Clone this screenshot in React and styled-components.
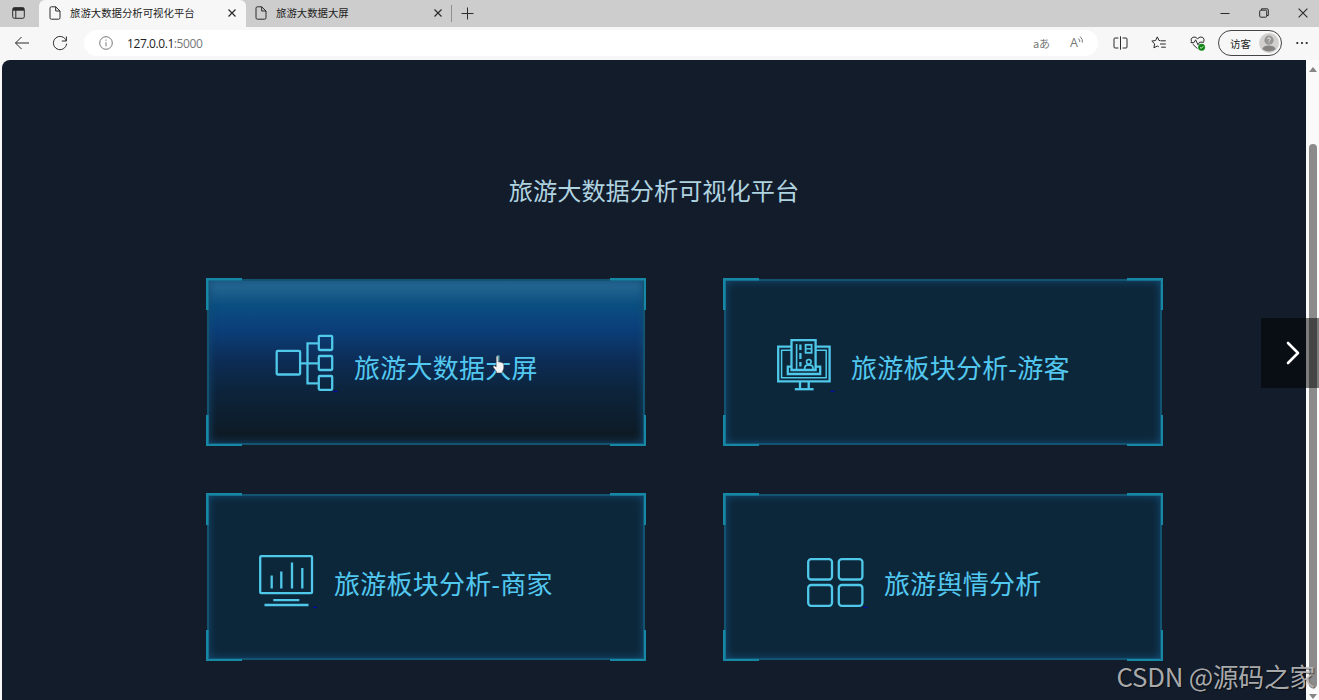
import React from 'react'
import styled, { createGlobalStyle, css } from 'styled-components'

const TreeIcon = () => (
	<LineIcon viewBox='0 0 80 60'>
		<rect x='2.7' y='18.9' width='23.4' height='23.6' rx='1' />
		<rect x='44.8' y='3.8' width='13.4' height='14.2' rx='1' />
		<rect x='44.8' y='24' width='13.4' height='14' rx='1' />
		<rect x='44.8' y='44' width='13.4' height='13.8' rx='1' />
		<path d='M26 31.4H44.8M44.8 11.3H33.5V51.3H44.8' />
		<path className='dash' d='M59.5 59.4H63.5' />
	</LineIcon>
)

const TicketIcon = () => (
	<LineIcon viewBox='0 0 80 60'>
		<path d='M20.5 14.7H7.2V49.4H58.6V14.7H44.6' />
		<path d='M20.5 18.3H10.6V45.8H55.2V18.3H44.6' strokeWidth='1.5' />
		<path d='M20.5 34.7H16.8V42H49.2V34.7H44.6' />
		<path d='M20.5 38V8.2H44.6V38Z' />
		<path d='M25.6 12V38' strokeWidth='1.6' />
		<path d='M29.4 12.5V18M29.4 21V27M29.4 30V34.5' />
		<rect x='34.6' y='12.8' width='6' height='8' strokeWidth='1.8' />
		<path d='M34.6 16.8H40.6' strokeWidth='1.5' />
		<circle cx='37.8' cy='29.8' r='2.3' strokeWidth='1.6' />
		<path d='M33.7 38V36Q34 33.4 36.3 33.2H39.3Q41.7 33.4 42 36V38' strokeWidth='1.7' />
		<path d='M29 50V56.7M37.7 50V56.7' />
		<path d='M23.8 57.2H42.6' />
		<path className='dash' d='M59.5 59.4H63.5' />
	</LineIcon>
)

const ChartIcon = () => (
	<LineIcon viewBox='0 0 80 60'>
		<rect x='6.2' y='8.2' width='51.8' height='37' rx='1' />
		<path d='M17.7 27.5V40.5M27.3 23.5V40.5M38 14.5V40.5M48.3 20V40.5' />
		<path d='M19.3 52.2H45.3M10.5 57H54.5' />
		<path className='dash' d='M59 59.4H63' />
	</LineIcon>
)

const BlocksIcon = () => (
	<LineIcon viewBox='0 0 80 60'>
		<rect x='4.2' y='11.1' width='23.8' height='20.4' rx='3' />
		<rect x='34.8' y='11.1' width='23.6' height='20.4' rx='3' />
		<rect x='4.2' y='37' width='23.8' height='20.8' rx='3' />
		<rect x='34.8' y='37' width='23.6' height='20.8' rx='3' />
		<path className='dash' d='M59.5 59.4H63.5' />
	</LineIcon>
)

const PageIcon = () => (
	<BarIcon width='12' height='14' viewBox='0 0 12 14'>
		<path d='M1 2.2Q1 .8 2.4.8H6.7L11 5V11.8Q11 13.2 9.6 13.2H2.4Q1 13.2 1 11.8ZM6.7.8V5H11' />
	</BarIcon>
)

const CrossIcon = ({ size = 8, stroke = 1.2 }) => (
	<BarIcon width={size} height={size} viewBox='0 0 8 8' strokeWidth={stroke}>
		<path d='M.5.5L7.5 7.5M7.5.5L.5 7.5' />
	</BarIcon>
)

const cards = [
	{ label: '旅游大数据大屏', icon: TreeIcon, indent: 68, active: true },
	{ label: '旅游板块分析-游客', icon: TicketIcon, indent: 48 },
	{ label: '旅游板块分析-商家', icon: ChartIcon, indent: 48, drop: 2 },
	{ label: '旅游舆情分析', icon: BlocksIcon, indent: 81, drop: 2 },
]

const App = () => {
	return (
		<Browser>
			<GlobalStyle />
			<TabBar>
				<TabMenu>
					<BarIcon width='13' height='12' viewBox='0 0 13 12'>
						<rect x='.7' y='.7' width='11.6' height='10.6' rx='1.6' />
						<path d='M1 2.2H12' strokeWidth='3' />
						<path d='M3.8 3V11' />
					</BarIcon>
				</TabMenu>
				<Tab $active $width={207}>
					<PageIcon />
					<TabTitle>旅游大数据分析可视化平台</TabTitle>
					<CrossIcon />
				</Tab>
				<Tab $width={205}>
					<PageIcon />
					<TabTitle>旅游大数据大屏</TabTitle>
					<CrossIcon />
				</Tab>
				<TabDivider />
				<BarIcon width='13' height='13' viewBox='0 0 13 13'>
					<path d='M6.5.5V12.5M.5 6.5H12.5' />
				</BarIcon>
				<WindowButtons>
					<BarIcon width='10' height='10' viewBox='0 0 10 10'>
						<path d='M.5 5.5H9.5' />
					</BarIcon>
					<BarIcon width='10' height='10' viewBox='0 0 10 10'>
						<rect x='.7' y='2.2' width='7' height='7' rx='1' />
						<path d='M2.5 2V.8H8Q9.3.8 9.3 2V7.5H8' />
					</BarIcon>
					<CrossIcon size={10} stroke={0.9} />
				</WindowButtons>
			</TabBar>

			<Toolbar>
				<BarIcon width='16' height='14' viewBox='0 0 16 14'>
					<path d='M15 7H1.5M7.5 1L1.5 7L7.5 13' />
				</BarIcon>
				<BarIcon width='16' height='16' viewBox='0 0 16 16'>
					<path d='M14.3 6A6.6 6.6 0 1 0 14.6 8.6M14.4 1.5V6H9.8' />
				</BarIcon>
				<AddressBar>
					<BarIcon $muted width='14' height='14' viewBox='0 0 14 14' strokeWidth='1'>
						<circle cx='7' cy='7' r='6.3' />
						<path d='M7 6.2V10.3M7 3.6V4.8' />
					</BarIcon>
					<Url>127.0.0.1<span>:5000</span></Url>
					<Translate>aあ</Translate>
					<ReadAloud>
						A
						<BarIcon $muted width='6' height='8' viewBox='0 0 6 8' strokeWidth='1'>
							<path d='M.5 2.5Q2 4 1.8 6M2.2.6Q5 3.2 4.4 6.6' />
						</BarIcon>
					</ReadAloud>
				</AddressBar>
				<Tools>
					<BarIcon width='15' height='14' viewBox='0 0 15 14'>
						<path d='M5.4 2H2Q1 2 1 3V11Q1 12 2 12H5.4M9.6 2H13Q14 2 14 3V11Q14 12 13 12H9.6M7.5.3V13.7' />
					</BarIcon>
					<BarIcon width='16' height='14' viewBox='0 0 16 14'>
						<path d='M9.2 4.5H8L6.3.9L4.6 4.5L.8 5.1L3.6 7.8L2.9 11.8L6.3 10L7.8 10.8M9.5 4.8H14.8M9 8H14.8M10.2 11.2H14.8' />
					</BarIcon>
					<BarIcon width='17' height='15' viewBox='0 0 17 15'>
						<path d='M1.4 5.7Q.4 2.8 2.5 1.4Q5.2 0 7.6 2.7Q10 0 12.8 1.4Q14.8 3 13.8 5.7M2.6 8L7.5 12.7M.6 6.6H4L5.6 3.8L8 8.8L9.6 6.2H14' />
						<circle cx='11.6' cy='11.3' r='3.2' fill='#128417' stroke='#128417' strokeWidth='.6' />
						<path d='M10.1 11.4L11.2 12.4L13.2 10.3' stroke='#fff' strokeWidth='.9' />
					</BarIcon>
				</Tools>
				<Profile>
					访客
					<svg width='20' height='20' viewBox='0 0 20 20'>
						<circle cx='10' cy='10' r='10' fill='#d2d0ce' />
						<circle cx='10' cy='7.2' r='4.6' fill='#979593' />
						<path d='M3.4 16.2Q4 12.6 10 12.6Q16 12.6 16.6 16.2Q10 20.8 3.4 16.2Z' fill='#858381' />
						<path d='M8.6 6.1Q8.8 4.8 10 4.8Q11.5 5 11.3 6.3Q10.9 7.2 10 7.8V8.5M10 9.6V10.3' fill='none' stroke='#eee' />
					</svg>
				</Profile>
				<BarIcon width='12' height='4' viewBox='0 0 12 4' strokeWidth='0'>
					<g fill='#222'>
						<circle cx='1.3' cy='2' r='1.1' />
						<circle cx='6' cy='2' r='1.1' />
						<circle cx='10.7' cy='2' r='1.1' />
					</g>
				</BarIcon>
			</Toolbar>

			<Content>
				<Page>
					<Title>旅游大数据分析可视化平台</Title>
					<CardGrid>
						{
							cards.map(({ label, icon: Icon, indent, drop, active }) => (
								<Card key={label} $indent={indent} $drop={drop} $active={active}>
									<Icon />
									<CardLabel>{label}</CardLabel>
								</Card>
							))
						}
					</CardGrid>
				</Page>
				<Scrollbar>
					<Arrow $up />
					<Thumb />
					<Arrow />
				</Scrollbar>
			</Content>

			<Pointer width='14' height='20' viewBox='0 0 14 20'>
				<path d='M4.2 10.5V2Q4.2.8 5.2.8Q6.2.8 6.2 2V7Q7.2 6.2 8 7.3Q9.2 6.6 9.9 7.9Q11.6 7.6 11.8 9.2V13Q11.6 15 10.5 16.2V18H4.4V16.6L1.2 12.2Q.6 10.8 2 10.6Q3.2 10.7 4.2 12Z' fill='#f4f4f4' stroke='#333' strokeWidth='.5' />
			</Pointer>
			<NextButton>
				<svg width='14' height='24' viewBox='0 0 14 24'>
					<path d='M2 2L12 12L2 22' fill='none' stroke='#fff' strokeWidth='2.6' strokeLinecap='round' strokeLinejoin='round' />
				</svg>
			</NextButton>
			<Watermark>CSDN @源码之家</Watermark>
		</Browser>
	)
}

const GlobalStyle = createGlobalStyle`
	* {
		box-sizing: border-box;
	}

	body {
		margin: 0;
		overflow: hidden;
		font-family: "Noto Sans CJK SC", "Noto Sans", sans-serif;
	}
`

const Browser = styled.div`
	position: relative;
	display: flex;
	flex-direction: column;
	height: 700px;
	overflow: hidden;
	background-color: #f7f7f7;
`

const BarIcon = styled.svg`
	flex: none;
	fill: none;
	stroke: ${({ $muted }) => $muted ? '#777' : '#2b2b2b'};
	stroke-linejoin: round;
`

const LineIcon = styled.svg`
	flex: none;
	width: 80px;
	height: 60px;
	fill: none;
	stroke: #4fc8ea;
	stroke-width: 2.3;

	.dash {
		stroke: #0808a8;
		stroke-width: 1.2;
	}
`

const TabBar = styled.div`
	display: flex;
	align-items: center;
	height: 27px;
	padding-bottom: 1px;
	background-color: #cdcdcd;
`

const TabMenu = styled.div`
	display: flex;
	justify-content: center;
	width: 39px;
	padding-right: 2px;
`

const Tab = styled.div`
	display: flex;
	align-items: center;
	width: ${({ $width }) => $width}px;
	height: 27px;
	margin-bottom: -1px;
	padding: 0 ${({ $active }) => $active ? 10 : 9}px 2px ${({ $active }) => $active ? 10 : 9}px;
	border-radius: 6px 6px 0 0;
	background-color: ${({ $active }) => $active ? '#f7f7f7' : 'transparent'};
`

const TabTitle = styled.span`
	flex: 1;
	margin-left: 9px;
	font-size: 10.4px;
	line-height: 16px;
	color: #1c1c1c;
	white-space: nowrap;
`

const TabDivider = styled.div`
	width: 1px;
	height: 17px;
	margin-right: 9px;
	background-color: #8f8f8f;
`

const WindowButtons = styled.div`
	display: flex;
	align-items: center;
	gap: 29px;
	margin-left: auto;
	padding-right: 11px;
`

const Toolbar = styled.div`
	display: flex;
	align-items: center;
	height: 33px;
	padding: 0 11px 1px 14px;
	background-color: #f7f7f7;

	> svg + svg {
		margin-left: 22px;
	}
`

const AddressBar = styled.div`
	display: flex;
	align-items: center;
	width: 1014px;
	height: 26px;
	margin-left: 16px;
	padding: 0 14px 0 15px;
	border-radius: 13px;
	background-color: #fff;
`

const Url = styled.span`
	flex: 1;
	margin-left: 14px;
	font-family: "Open Sans", "Noto Sans", sans-serif;
	font-size: 12px;
	letter-spacing: -0.42px;
	color: #222;

	span {
		color: #777;
	}
`

const Translate = styled.span`
	margin-right: 20px;
	font-size: 11px;
	line-height: 16px;
	color: #777;
`

const ReadAloud = styled.span`
	display: flex;
	align-items: center;
	font-family: "Open Sans", sans-serif;
	font-size: 12.5px;
	line-height: 16px;
	color: #777;

	svg {
		margin-bottom: 6px;
	}
`

const Tools = styled.div`
	display: flex;
	align-items: center;
	gap: 23px;
	margin-left: 15px;
`

const Profile = styled.div`
	display: flex;
	align-items: center;
	justify-content: space-between;
	width: 64px;
	height: 26px;
	margin: 0 auto 0 11px;
	padding: 0 2px 0 11px;
	border: 1px solid #444;
	border-radius: 13px;
	font-size: 10.5px;
	color: #1c1c1c;
`

const Content = styled.div`
	display: flex;
	flex: 1;
	padding-left: 2px;
`

const Page = styled.main`
	width: 1304px;
	height: 640px;
	border-top-left-radius: 8px;
	background-color: #131c2a;
`

const Title = styled.h1`
	margin: 112px 0 0;
	font-size: 24.2px;
	font-weight: 400;
	line-height: 36px;
	text-align: center;
	color: #b0d3e0;
`

const CardGrid = styled.div`
	display: grid;
	grid-template-columns: 440px 440px;
	grid-auto-rows: 168px;
	gap: 47px 77px;
	margin: 70px 0 0 204px;
`

const mark = 'linear-gradient(#1688a6, #1688a6)'

const Card = styled.a`
	position: relative;
	display: flex;
	align-items: center;
	padding-top: ${({ $drop = 0 }) => $drop}px;
	padding-left: ${({ $indent }) => $indent}px;
	background-color: #0d273a;
	box-shadow: inset 0 0 0 1px #131f2d, inset 0 0 0 3px #125372, inset 0 0 8px 3px #134b75;

	${({ $active }) => $active && css`
		background-image: linear-gradient(#296f9f 0%, #22638f 6%, #0a4f80 16%, #0b3f7b 30%, #0d2c54 50%, #0c243b 68%, #0e1b26 92%, #101a24 100%);
	`}

	/* bright brackets in the four corners */
	&::after {
		content: '';
		position: absolute;
		inset: 0;
		background:
			${mark} left top / 36px 2.5px,
			${mark} left top / 2.5px 32px,
			${mark} right top / 36px 2.5px,
			${mark} right top / 2.5px 32px,
			${mark} left bottom / 36px 2.5px,
			${mark} left bottom / 2.5px 31px,
			${mark} right bottom / 36px 2.5px,
			${mark} right bottom / 2.5px 31px;
		background-repeat: no-repeat;
	}
`

const CardLabel = styled.span`
	padding-top: 11px;
	font-family: "Open Sans", "Noto Sans CJK SC", sans-serif;
	font-size: 26px;
	font-weight: 400;
	line-height: 36px;
	letter-spacing: ${26 / 100}px;
	color: #52c8f0;
	white-space: nowrap;
`

const Scrollbar = styled.div`
	display: flex;
	flex: 1;
	flex-direction: column;
	align-items: center;
	padding: 7px 0 1px 1px;
	background-color: #fafafa;
`

const Arrow = styled.div`
	border: 4px solid transparent;
	border-top-width: ${({ $up }) => $up ? 0 : 5}px;
	border-bottom-width: ${({ $up }) => $up ? 5 : 0}px;
	border-${({ $up }) => $up ? 'bottom' : 'top'}-color: #858585;
`

const Thumb = styled.div`
	flex: 1;
	width: 8px;
	margin: 72px 0 6px;
	border-radius: 4px;
	background-color: #8b8b8b;
`

const Pointer = styled.svg`
	position: absolute;
	left: 492px;
	top: 355px;
`

const NextButton = styled.div`
	position: absolute;
	right: 0;
	top: 318px;
	display: flex;
	align-items: center;
	justify-content: center;
	width: 58px;
	height: 70px;
	padding-left: 6px;
	background-color: rgba(0, 0, 0, 0.5);
`

const Watermark = styled.div`
	position: absolute;
	right: 4px;
	bottom: 6px;
	font-size: 25.8px;
	font-weight: 400;
	line-height: 36px;
	letter-spacing: -0.25px;
	color: rgba(190, 190, 190, 0.9);
	text-shadow: 1px 1px 1px rgba(0, 0, 0, 0.5);
	white-space: nowrap;
`

export default App
